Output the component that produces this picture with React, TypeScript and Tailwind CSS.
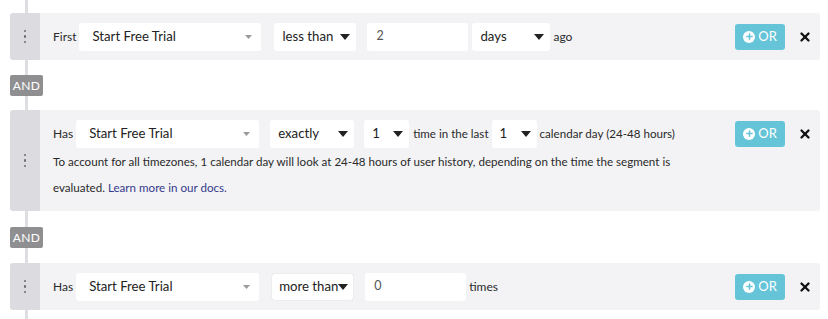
import { Plus, X } from 'lucide-react'

const FONT = { fontFamily: 'Lato, "Open Sans", sans-serif' }

function Handle() {
  return (
    <div className="w-[30px] shrink-0 bg-[#dcdce0] rounded-l-[3px] flex flex-col items-center justify-center gap-[3px]">
      <span className="w-[2.5px] h-[2.5px] rounded-full bg-[#6b6b70]" />
      <span className="w-[2.5px] h-[2.5px] rounded-full bg-[#6b6b70]" />
      <span className="w-[2.5px] h-[2.5px] rounded-full bg-[#6b6b70]" />
    </div>
  )
}

function Caret({ light }: { light?: boolean }) {
  return light ? (
    <svg width="7" height="4" viewBox="0 0 7 4" className="shrink-0">
      <path d="M0 0h7L3.5 4z" fill="#9a9a9e" />
    </svg>
  ) : (
    <svg width="10" height="6" viewBox="0 0 10 6" className="shrink-0">
      <path d="M0 0h10L5 6z" fill="#222" />
    </svg>
  )
}

function Select({
  value,
  width,
  light,
  className = '',
}: {
  value: string
  width: string
  light?: boolean
  className?: string
}) {
  return (
    <div
      className={`${width} h-[28px] shrink-0 whitespace-nowrap bg-white rounded-[3px] flex items-center justify-between text-[13.2px] text-[#222] ${
        light ? 'pl-[13px] pr-[9px]' : 'pl-[8px] pr-[6px]'
      } ${className}`}
    >
      <span>{value}</span>
      <Caret light={light} />
    </div>
  )
}

function Input({ value, width }: { value: string; width: string }) {
  return (
    <div
      className={`${width} h-[28px] shrink-0 bg-white rounded-[3px] flex items-center px-[9px] text-[12.5px] text-[#555]`}
    >
      {value}
    </div>
  )
}

function Actions() {
  return (
    <div className="flex items-center gap-[13px] shrink-0">
      <button className="w-[50px] h-[26px] bg-[#66c4d8] rounded-[3px] flex items-center justify-center gap-[3px] text-white text-[13px]">
        <span className="w-[12px] h-[12px] rounded-full bg-white flex items-center justify-center">
          <Plus size={9} strokeWidth={4} color="#66c4d8" />
        </span>
        OR
      </button>
      <X size={14} strokeWidth={4} color="#111" />
    </div>
  )
}

function AndBadge() {
  return (
    <div className="w-[33px] h-[21px] bg-[#8f8f91] rounded-[2px] flex items-center justify-center text-white text-[12px] tracking-[0.3px]">
      AND
    </div>
  )
}

export default function App() {
  return (
    <div className="w-[828px] h-[319px] bg-white relative overflow-hidden text-[#2a2a2a]" style={FONT}>
      <div className="absolute left-[25px] top-0 bottom-0 w-[3px] bg-[#dedee2]" />

      <div className="relative pl-[10px] pr-[8px] pt-[13px] flex flex-col">
        {/* row 1 */}
        <div className="flex h-[47px]">
          <Handle />
          <div className="flex-1 bg-[#f3f3f5] rounded-r-[3px] flex items-center whitespace-nowrap pl-[13px] pr-[8px]">
            <span className="text-[12px] mr-[3px]">First</span>
            <Select value="Start Free Trial" width="w-[182px]" light />
            <Select value="less than" width="w-[82px]" className="ml-[13px]" />
            <div className="ml-[11px]">
              <Input value="2" width="w-[101px]" />
            </div>
            <Select value="days" width="w-[78px]" className="ml-[4px]" />
            <span className="text-[12px] ml-[3px]">ago</span>
            <div className="ml-auto">
              <Actions />
            </div>
          </div>
        </div>

        <div className="mt-[15px] mb-[14px]">
          <AndBadge />
        </div>

        {/* row 2 */}
        <div className="flex h-[101px]">
          <Handle />
          <div className="flex-1 bg-[#f3f3f5] rounded-r-[3px] pl-[13px] pr-[8px] pt-[9px]">
            <div className="flex items-center whitespace-nowrap">
              <span className="text-[12px] mr-[3px]">Has</span>
              <Select value="Start Free Trial" width="w-[183px]" light className="mt-[1px]" />
              <Select value="exactly" width="w-[84px]" className="ml-[11px]" />
              <Select value="1" width="w-[45px]" className="ml-[10px]" />
              <span className="text-[11.6px] ml-[4px]">time in the last</span>
              <Select value="1" width="w-[45px]" className="ml-[3px]" />
              <span className="text-[11.6px] ml-[3px]">calendar day (24-48 hours)</span>
              <div className="ml-auto">
                <Actions />
              </div>
            </div>
            <p className="text-[11.6px] leading-[26px] mt-[1px] whitespace-nowrap">
              To account for all timezones, 1 calendar day will look at 24-48 hours of user history, depending on the
              time the segment is
              <br />
              evaluated. <span className="text-[#353a8a]">Learn more in our docs.</span>
            </p>
          </div>
        </div>

        <div className="mt-[16px] mb-[15px]">
          <AndBadge />
        </div>

        {/* row 3 */}
        <div className="flex h-[47px]">
          <Handle />
          <div className="flex-1 bg-[#f3f3f5] rounded-r-[3px] flex items-center whitespace-nowrap pl-[13px] pr-[8px]">
            <span className="text-[12px] mr-[3px]">Has</span>
            <Select value="Start Free Trial" width="w-[183px]" light />
            <div className="ml-[13px] w-[81px] h-[26px] shrink-0 bg-white rounded-[2px] shadow-[0_0_1px_rgba(0,0,0,0.25)] flex items-center pl-[7px] text-[13.2px] text-[#222]">
              <span>more than</span>
              <Caret />
            </div>
            <div className="ml-[12px]">
              <Input value="0" width="w-[101px]" />
            </div>
            <span className="text-[12px] ml-[3px]">times</span>
            <div className="ml-auto">
              <Actions />
            </div>
          </div>
        </div>
      </div>
    </div>
  )
}
